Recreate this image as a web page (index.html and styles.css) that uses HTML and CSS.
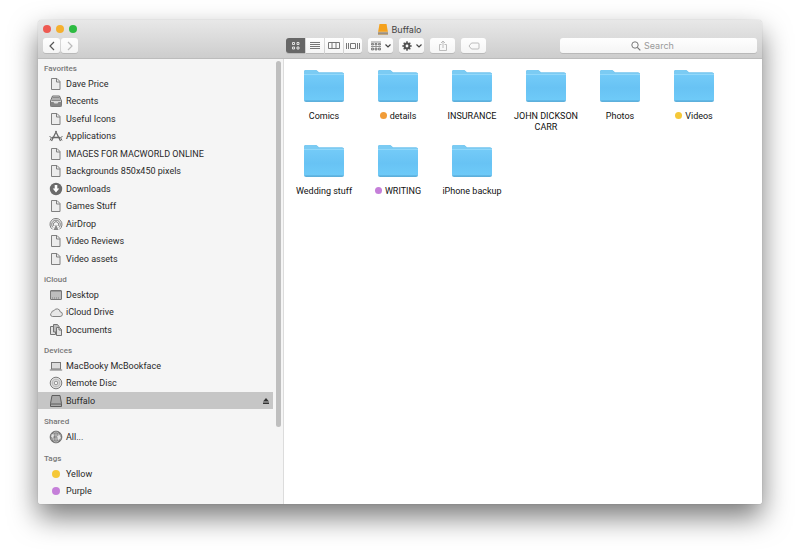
FILE: index.html
```html
<!DOCTYPE html>
<html lang="en">

<head>
    <meta charset="UTF-8">
    <meta name="viewport" content="width=device-width, initial-scale=1.0">
    <title>Buffalo</title>
    <link rel="stylesheet" href="styles.css">
</head>

<body>
    <!-- shared icons -->
    <svg class="sprite" aria-hidden="true">
        <defs>
            <linearGradient id="folder-front" x1="0" y1="0" x2="0" y2="1">
                <stop offset="0" stop-color="#74cbf8" />
                <stop offset="0.5" stop-color="#68c3f4" />
                <stop offset="0.93" stop-color="#6ecaf8" />
                <stop offset="0.96" stop-color="#57a9d6" />
                <stop offset="1" stop-color="#62b5e0" />
            </linearGradient>
        </defs>
        <symbol id="folder" viewBox="0 0 42 34">
            <path d="M1 31V3q0-2 2-2h9q1.500 0 2.500 1l1.500 1.500H39q2 0 2 2V31z" fill="#5fb4e2" />
            <path d="M1 31V3q0-2 2-2h9q1.500 0 2.500 1l1.500 1.500H39q2 0 2 2V8H1z" fill="#7bcbf3" />
            <path d="M1 5h40v26q0 2-2 2H3q-2 0-2-2z" fill="url(#folder-front)" />
            <path d="M1 5.500h40" stroke="#92d8fa" />
        </symbol>
        <symbol id="doc" viewBox="0 0 14 14">
            <path d="M2.500 1.500h5.500l3 3v8H2.500z" fill="#ececec" stroke="#808080" />
            <path d="M7.500 1.500v3.500H11" fill="none" stroke="#808080" />
        </symbol>
        <symbol id="recents" viewBox="0 0 14 14">
            <path d="M3.500 2h7l2 5v4.500q0 1-1 1h-9q-1 0-1-1V7z" fill="#d8d8d8" stroke="#6e6e6e" />
            <path d="M3.500 3.500h7M3 5h8M2.500 6.500h9" stroke="#777" stroke-width=".8" />
            <path d="M1.500 8h3l1 1.500h3l1-1.500h3v4.500h-11z" fill="#858585" />
        </symbol>
        <symbol id="apps" viewBox="0 0 14 14">
            <path d="M2.500 12L7.500 2M6.500 2l5 10M3 8.500h8" fill="none" stroke="#6a6a6a" stroke-width="1.300" />
            <path d="M.5 7.500l2 1-1.500 3M13.500 7.500l-2 1 1.500 3" fill="none" stroke="#6a6a6a" />
        </symbol>
        <symbol id="download" viewBox="0 0 14 14">
            <circle cx="7" cy="7" r="6.200" fill="#6b6b6b" />
            <path d="M5.700 3h2.600v3.500h2L7 10.500 3.700 6.500h2z" fill="#fff" />
        </symbol>
        <symbol id="airdrop" viewBox="0 0 14 14">
            <g fill="none" stroke="#6e6e6e" stroke-width=".9">
                <path d="M3.500 12.300a6 6 0 1 1 7 0" />
                <path d="M4 10.500a4.300 4.300 0 1 1 6 0" />
                <path d="M5 9a2.600 2.600 0 1 1 4 0" />
            </g>
            <path d="M7 7.500l-2.500 5.500h5z" fill="#8a8a8a" />
        </symbol>
        <symbol id="desktop" viewBox="0 0 14 14">
            <rect x="1.500" y="2.500" width="11" height="9" rx=".5" fill="#bdbdbd" stroke="#777" />
            <path d="M2 3.500h10" stroke="#999" />
            <path d="M3 10h8" stroke="#808080" stroke-dasharray="1 1" />
        </symbol>
        <symbol id="cloud" viewBox="0 0 14 14">
            <path d="M3.500 11.500h7.500a2.300 2.300 0 0 0 .2-4.600 3.300 3.300 0 0 0-6.300-1.100 1.800 1.800 0 0 0-2.200 1.900 2 2 0 0 0 .8 3.800z" fill="#e8e8e8" stroke="#777" stroke-width=".9" />
        </symbol>
        <symbol id="docs" viewBox="0 0 14 14">
            <path d="M1.500 3.500h5v8h-5z" fill="#e2e2e2" stroke="#747474" />
            <path d="M4.500 1.500h4l1.500 2v5.500H4.500z" fill="#bbb" stroke="#747474" />
            <path d="M7.500 4.500h3l2 2v6h-5z" fill="#e2e2e2" stroke="#747474" />
            <path d="M10 4.500v2.500h2.500" fill="none" stroke="#747474" />
        </symbol>
        <symbol id="laptop" viewBox="0 0 14 14">
            <rect x="2.500" y="3.500" width="9" height="6.500" fill="#dcdcdc" stroke="#777" />
            <path d="M.8 11h12.400" stroke="#777" />
        </symbol>
        <symbol id="disc" viewBox="0 0 14 14">
            <circle cx="7" cy="7" r="5.800" fill="#dedede" stroke="#7c7c7c" />
            <circle cx="7" cy="7" r="3.800" fill="none" stroke="#b0b0b0" stroke-width=".8" />
            <circle cx="7" cy="7" r="1.800" fill="#f3f3f3" stroke="#7c7c7c" stroke-width=".8" />
        </symbol>
        <symbol id="drive" viewBox="0 0 14 14">
            <path d="M3 1.500h8l1.500 8v3h-11v-3z" fill="#a9a9a9" stroke="#5d5d5d" stroke-linejoin="round" />
            <path d="M1.500 10h11" stroke="#5d5d5d" />
        </symbol>
        <symbol id="globe" viewBox="0 0 14 14">
            <circle cx="7" cy="7" r="6" fill="#7d7d7d" />
            <g fill="none" stroke="#d0d0d0" stroke-width=".7">
                <ellipse cx="7" cy="7" rx="3" ry="5.500" />
                <path d="M1.500 5h11M1.500 9h11M7 1.500v11" />
            </g>
            <path d="M3 4l2 1-1 3-2-1zM8 6l3-1 1 3-3 2z" fill="#e3e3e3" />
            <circle cx="7" cy="7" r="5.900" fill="none" stroke="#6d6d6d" stroke-width=".8" />
        </symbol>
        <symbol id="chevron" viewBox="0 0 6 6">
            <path d="M.5 1.500l2.500 2.500 2.500-2.500" fill="none" stroke="#444" stroke-width="1.200" />
        </symbol>
    </svg>

    <div class="window">
        <header class="window-header">
            <div class="titlebar">
                <div class="lights">
                    <button type="button" class="light red" aria-label="Close"></button>
                    <button type="button" class="light amber" aria-label="Minimize"></button>
                    <button type="button" class="light green" aria-label="Zoom"></button>
                </div>
                <h1 class="title">
                    <svg class="title-icon" viewBox="0 0 10 11" aria-hidden="true">
                        <path d="M1.500 0h7L10 8.500v2H0v-2z" fill="#f5a21d" />
                        <path d="M0 8h10v2.500H0z" fill="#9b8f80" />
                        <path d="M0 8h10" stroke="#d8c9ac" stroke-width=".6" />
                    </svg>
                    Buffalo
                </h1>
            </div>

            <div class="toolbar">
                <div class="history">
                    <button type="button" class="tool-btn" aria-label="Back">
                        <svg width="8" height="10" viewBox="0 0 8 10"><path d="M6 1L2 5l4 4" fill="none" stroke="#555" stroke-width="1.200" /></svg>
                    </button>
                    <button type="button" class="tool-btn" aria-label="Forward">
                        <svg width="8" height="10" viewBox="0 0 8 10"><path d="M2 1l4 4-4 4" fill="none" stroke="#bbb" stroke-width="1.200" /></svg>
                    </button>
                </div>
                <div class="views">
                    <button type="button" class="view-btn active" aria-label="Icon view">
                        <svg width="10" height="10" viewBox="0 0 10 10"><path d="M1.500 1.500h2v2h-2zM6 1.500h2v2H6zM1.500 6h2v2h-2zM6 6h2v2H6z" fill="none" stroke="#eee" stroke-width=".9" /></svg>
                    </button>
                    <button type="button" class="view-btn" aria-label="List view">
                        <svg width="10" height="10" viewBox="0 0 10 10"><path d="M0 1.500h10M0 3.500h10M0 5.500h10M0 7.500h10" stroke="#666" stroke-width=".9" /></svg>
                    </button>
                    <button type="button" class="view-btn" aria-label="Column view">
                        <svg width="12" height="10" viewBox="0 0 12 10"><path d="M.5 1.500h11v6H.5zM4 1.500v6M8 1.500v6" fill="none" stroke="#777" /></svg>
                    </button>
                    <button type="button" class="view-btn" aria-label="Gallery view">
                        <svg width="14" height="10" viewBox="0 0 14 10"><path d="M4.500 2.500h5v5h-5zM.5 2v6M2.500 2v6M11.500 2v6M13.500 2v6" fill="none" stroke="#777" /></svg>
                    </button>
                </div>
                <button type="button" class="tool-btn wide" aria-label="Arrange">
                    <svg width="10" height="10" viewBox="0 0 10 10">
                        <path d="M0 1h10M0 5.500h10" stroke="#777" stroke-width=".8" />
                        <path d="M.5 2.500h2v1.500h-2zM4 2.500h2v1.500H4zM7.500 2.500h2v1.500h-2zM.5 7h2v2h-2zM4 7h2v2H4zM7.500 7h2v2h-2z" fill="#bbb" stroke="#666" stroke-width=".7" />
                    </svg>
                    <svg width="6" height="6"><use href="#chevron" /></svg>
                </button>
                <button type="button" class="tool-btn wide" aria-label="Action">
                    <svg width="10" height="10" viewBox="0 0 10 10">
                        <path d="M5 .3v9.400M.3 5h9.400M1.700 1.700l6.600 6.600M8.300 1.700L1.700 8.300" stroke="#505050" stroke-width="1.500" />
                        <circle cx="5" cy="5" r="2.400" fill="#f9f9f9" stroke="#505050" stroke-width="2" />
                    </svg>
                    <svg width="6" height="6"><use href="#chevron" /></svg>
                </button>
                <button type="button" class="tool-btn wide" aria-label="Share">
                    <svg width="10" height="12" viewBox="0 0 10 12"><path d="M3.500 4.500h-2v6h7v-6h-2M5 8V1M3 3l2-2 2 2" fill="none" stroke="#b4b4b4" stroke-width=".9" /></svg>
                </button>
                <button type="button" class="tool-btn wide" aria-label="Edit tags">
                    <svg width="12" height="8" viewBox="0 0 12 8"><path d="M3.500 1H10q1 0 1 1v4q0 1-1 1H3.500L1 4z" fill="none" stroke="#b4b4b4" stroke-width=".9" /></svg>
                </button>
                <label class="search">
                    <svg width="10" height="10" viewBox="0 0 10 10" aria-hidden="true"><circle cx="4" cy="4" r="3.200" fill="none" stroke="#777" /><path d="M6.300 6.300L9.300 9.300" stroke="#777" stroke-width="1.200" /></svg>
                    <input type="search" placeholder="Search" aria-label="Search">
                </label>
            </div>
        </header>

        <div class="window-body">
            <aside class="sidebar">
                <nav class="places">
                    <section class="group">
                        <h2>Favorites</h2>
                        <ul>
                            <li><a href="#"><svg><use href="#doc" /></svg>Dave Price</a></li>
                            <li><a href="#"><svg><use href="#recents" /></svg>Recents</a></li>
                            <li><a href="#"><svg><use href="#doc" /></svg>Useful Icons</a></li>
                            <li><a href="#"><svg><use href="#apps" /></svg>Applications</a></li>
                            <li><a href="#"><svg><use href="#doc" /></svg>IMAGES FOR MACWORLD ONLINE</a></li>
                            <li><a href="#"><svg><use href="#doc" /></svg>Backgrounds 850x450 pixels</a></li>
                            <li><a href="#"><svg><use href="#download" /></svg>Downloads</a></li>
                            <li><a href="#"><svg><use href="#doc" /></svg>Games Stuff</a></li>
                            <li><a href="#"><svg><use href="#airdrop" /></svg>AirDrop</a></li>
                            <li><a href="#"><svg><use href="#doc" /></svg>Video Reviews</a></li>
                            <li><a href="#"><svg><use href="#doc" /></svg>Video assets</a></li>
                        </ul>
                    </section>
                    <section class="group">
                        <h2>iCloud</h2>
                        <ul>
                            <li><a href="#"><svg><use href="#desktop" /></svg>Desktop</a></li>
                            <li><a href="#"><svg><use href="#cloud" /></svg>iCloud Drive</a></li>
                            <li><a href="#"><svg><use href="#docs" /></svg>Documents</a></li>
                        </ul>
                    </section>
                    <section class="group">
                        <h2>Devices</h2>
                        <ul>
                            <li><a href="#"><svg><use href="#laptop" /></svg>MacBooky McBookface</a></li>
                            <li><a href="#"><svg><use href="#disc" /></svg>Remote Disc</a></li>
                            <li class="selected">
                                <a href="#"><svg><use href="#drive" /></svg>Buffalo</a>
                                <button type="button" class="eject" aria-label="Eject Buffalo">
                                    <svg width="6" height="6" viewBox="0 0 6 6"><path d="M3 0l3 3.500H0zM0 4.500h6V6H0z" fill="#333" /></svg>
                                </button>
                            </li>
                        </ul>
                    </section>
                    <section class="group">
                        <h2>Shared</h2>
                        <ul>
                            <li><a href="#"><svg><use href="#globe" /></svg>All...</a></li>
                        </ul>
                    </section>
                    <section class="group">
                        <h2>Tags</h2>
                        <ul>
                            <li><a href="#"><span class="dot yellow"></span>Yellow</a></li>
                            <li><a href="#"><span class="dot purple"></span>Purple</a></li>
                        </ul>
                    </section>
                </nav>
                <div class="scroll-track">
                    <div class="scroll-thumb"></div>
                </div>
            </aside>

            <main class="files">
                <a class="file" href="#"><svg><use href="#folder" /></svg><span>Comics</span></a>
                <a class="file" href="#"><svg><use href="#folder" /></svg><span><i class="tag orange"></i>details</span></a>
                <a class="file" href="#"><svg><use href="#folder" /></svg><span>INSURANCE</span></a>
                <a class="file" href="#"><svg><use href="#folder" /></svg><span>JOHN DICKSON CARR</span></a>
                <a class="file" href="#"><svg><use href="#folder" /></svg><span>Photos</span></a>
                <a class="file" href="#"><svg><use href="#folder" /></svg><span><i class="tag yellow"></i>Videos</span></a>
                <a class="file" href="#"><svg><use href="#folder" /></svg><span>Wedding stuff</span></a>
                <a class="file" href="#"><svg><use href="#folder" /></svg><span><i class="tag purple"></i>WRITING</span></a>
                <a class="file" href="#"><svg><use href="#folder" /></svg><span>iPhone backup</span></a>
            </main>
        </div>
    </div>
</body>

</html>
```
FILE: styles.css
```css
* {
    box-sizing: border-box;
}

body {
    font-family: Roboto, Inter, sans-serif;
    font-size: 9px;
    margin: 0;
    padding: 20px 38px 54px;
    min-height: 100vh;
    display: flex;
    background-color: white;
    color: #2a2a2a;
}

.sprite {
    position: absolute;
    width: 0;
    height: 0;
}

h1,
h2,
ul {
    margin: 0;
    padding: 0;
}

ul {
    list-style: none;
}

a {
    color: inherit;
    text-decoration: none;
}

button {
    border: none;
    padding: 0;
    font: inherit;
}

.window {
    flex: 1;
    display: flex;
    flex-direction: column;
    border-radius: 4px 4px 3px 3px;
    overflow: hidden;
    box-shadow: 0 0 1px rgba(0, 0, 0, 0.3), 0 13px 28px rgba(0, 0, 0, 0.53);
}

/* title bar and toolbar */
.window-header {
    height: 39px;
    background: linear-gradient(#e8e8e8, #cdcdcd);
    border-bottom: 1px solid #bcbcbc;
    font-family: Inter, sans-serif;
}

.titlebar {
    display: grid;
    grid-template-columns: 1fr auto 1fr;
    align-items: center;
    height: 18px;
    padding: 0 5px;
}

.lights {
    display: flex;
    gap: 5px;
}

.light {
    width: 8px;
    height: 8px;
    border-radius: 50%;
}

.red {
    background-color: #ee5a52;
}

.amber {
    background-color: #f5b02f;
}

.green {
    background-color: #2dbb42;
}

.title {
    display: flex;
    align-items: center;
    gap: 3px;
    font-size: 9px;
    font-weight: 400;
    color: #444;
}

.title-icon {
    width: 10px;
    height: 11px;
}

.toolbar {
    display: flex;
    gap: 6px;
    padding-right: 5px;
}

.history {
    display: flex;
    gap: 1px;
    width: 242px;
    padding-left: 5px;
}

.tool-btn,
.view-btn,
.search {
    height: 15px;
    display: flex;
    align-items: center;
    justify-content: center;
    background: linear-gradient(#fefefe, #f5f5f5);
    box-shadow: 0 1px 0 #b9b9b9;
}

.tool-btn {
    width: 17px;
    gap: 4px;
    border-radius: 3px;
}

.tool-btn.wide {
    width: 25px;
}

.views {
    display: flex;
    gap: 1px;
    border-radius: 3px;
}

.view-btn {
    width: 18px;
}

.view-btn:first-child {
    width: 19px;
    border-radius: 3px 0 0 3px;
}

.view-btn:last-child {
    border-radius: 0 3px 3px 0;
}

.view-btn.active {
    background: #676767;
}

.search {
    width: 197px;
    margin-left: auto;
    padding-left: 71px;
    gap: 3px;
    border-radius: 3px;
}

.search input {
    flex: 1;
    min-width: 0;
    border: none;
    outline: none;
    padding: 0;
    background: none;
    font: inherit;
}

.search input::placeholder {
    color: #999;
}

/* sidebar */
.window-body {
    flex: 1;
    display: flex;
}

.sidebar {
    display: flex;
    width: 246px;
    background-color: #f5f5f5;
    border-right: 1px solid #dcdcdc;
}

.places {
    flex: 1;
    padding: 4px 0;
}

.group {
    margin-bottom: 7px;
}

.group:last-child {
    margin-bottom: 0;
}

.group h2 {
    padding-left: 6px;
    font-size: 8px;
    font-weight: 500;
    line-height: 12px;
    color: #777;
}

.group li {
    display: flex;
    align-items: center;
    height: 17px;
}

.group li:nth-child(even),
.group li:only-child {
    height: 18px;
}

.group li a {
    flex: 1;
    display: flex;
    align-items: center;
    gap: 3px;
    padding-left: 11px;
}

.group li a svg {
    width: 14px;
    height: 14px;
}

.group .selected {
    background-color: #c6c6c6;
}

.eject {
    display: flex;
    margin-right: 4px;
    background: none;
}

.dot {
    width: 8px;
    height: 8px;
    margin: 0 3px;
    border-radius: 50%;
}

.yellow {
    background-color: #f5c838;
}

.purple {
    background-color: #c57fd9;
}

.orange {
    background-color: #f19c38;
}

.scroll-track {
    width: 10px;
    padding: 2px 2px 2px 3px;
}

.scroll-thumb {
    height: 83%;
    border-radius: 3px;
    background-color: #bfbfbf;
}

/* folders */
.files {
    flex: 1;
    display: grid;
    grid-template-columns: repeat(auto-fill, 74px);
    grid-auto-rows: 75px;
    align-content: start;
    padding: 10px 3px;
    background-color: white;
}

.file {
    display: flex;
    flex-direction: column;
    align-items: center;
    gap: 8px;
    line-height: 11px;
    text-align: center;
    color: #111;
}

.file svg {
    width: 42px;
    height: 34px;
}

.tag {
    display: inline-block;
    width: 7px;
    height: 7px;
    margin-right: 3px;
    border-radius: 50%;
}
```
